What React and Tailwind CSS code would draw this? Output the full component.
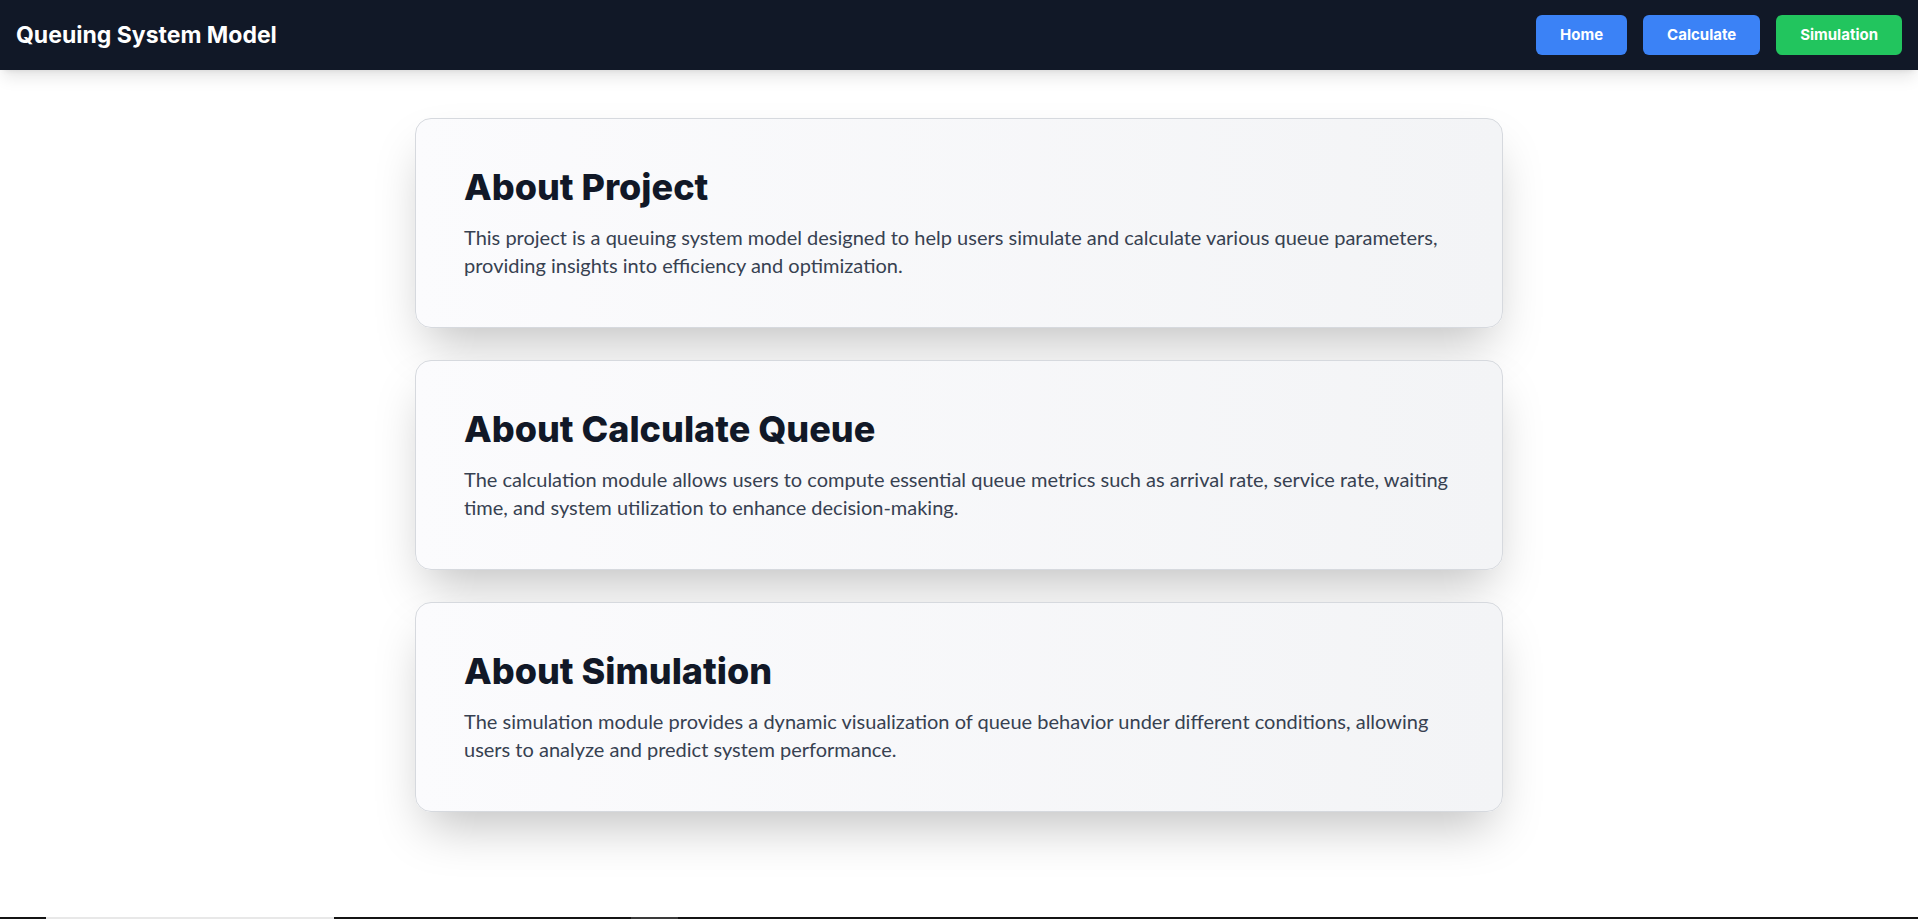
import React from "react";

const cards = [
  {
    title: "About Project",
    text: "This project is a queuing system model designed to help users simulate and calculate various queue parameters, providing insights into efficiency and optimization.",
  },
  {
    title: "About Calculate Queue",
    text: "The calculation module allows users to compute essential queue metrics such as arrival rate, service rate, waiting time, and system utilization to enhance decision-making.",
  },
  {
    title: "About Simulation",
    text: "The simulation module provides a dynamic visualization of queue behavior under different conditions, allowing users to analyze and predict system performance.",
  },
];

function NavButton({ children, green }) {
  return (
    <button
      className={
        green
          ? "h-10 px-6 rounded-md bg-[#22c55e] text-white font-bold text-[15px] font-['Inter',sans-serif]"
          : "h-10 px-6 rounded-md bg-[#3b82f6] text-white font-bold text-[15px] font-['Inter',sans-serif]"
      }
    >
      {children}
    </button>
  );
}

export default function App() {
  return (
    <div className="min-h-screen bg-white font-['Lato',sans-serif]">
      <nav className="h-[70px] bg-[#111827] px-4 flex items-center justify-between shadow-lg relative z-10">
        <h1 className="text-[23px] font-bold text-white font-['Inter',sans-serif]">Queuing System Model</h1>
        <div className="flex items-center gap-4">
          <NavButton>Home</NavButton>
          <NavButton>Calculate</NavButton>
          <NavButton green>Simulation</NavButton>
        </div>
      </nav>
      <main className="pt-[48px] pb-[105px]">
        <div className="max-w-6xl mx-auto px-8 flex flex-col gap-8">
          {cards.map((c) => (
            <section
              key={c.title}
              className="rounded-2xl border border-[#d6d9de] bg-linear-to-r from-[#fbfbfd] to-[#f3f4f6] p-12 shadow-2xl"
            >
              <h2 className="text-4xl leading-10 font-extrabold text-[#111827] mb-4 font-['Inter',sans-serif]">{c.title}</h2>
              <p className="text-xl leading-7 text-[#374151]">{c.text}</p>
            </section>
          ))}
        </div>
      </main>
      <footer className="h-[40px] bg-[#141414] flex items-start">
        <div className="ml-[46px] w-[288px] h-[2px] bg-[#e8e8e8]"></div>
        <div className="ml-[297px] w-[47px] h-[2px] bg-[#3a3a3a]"></div>
      </footer>
    </div>
  );
}
